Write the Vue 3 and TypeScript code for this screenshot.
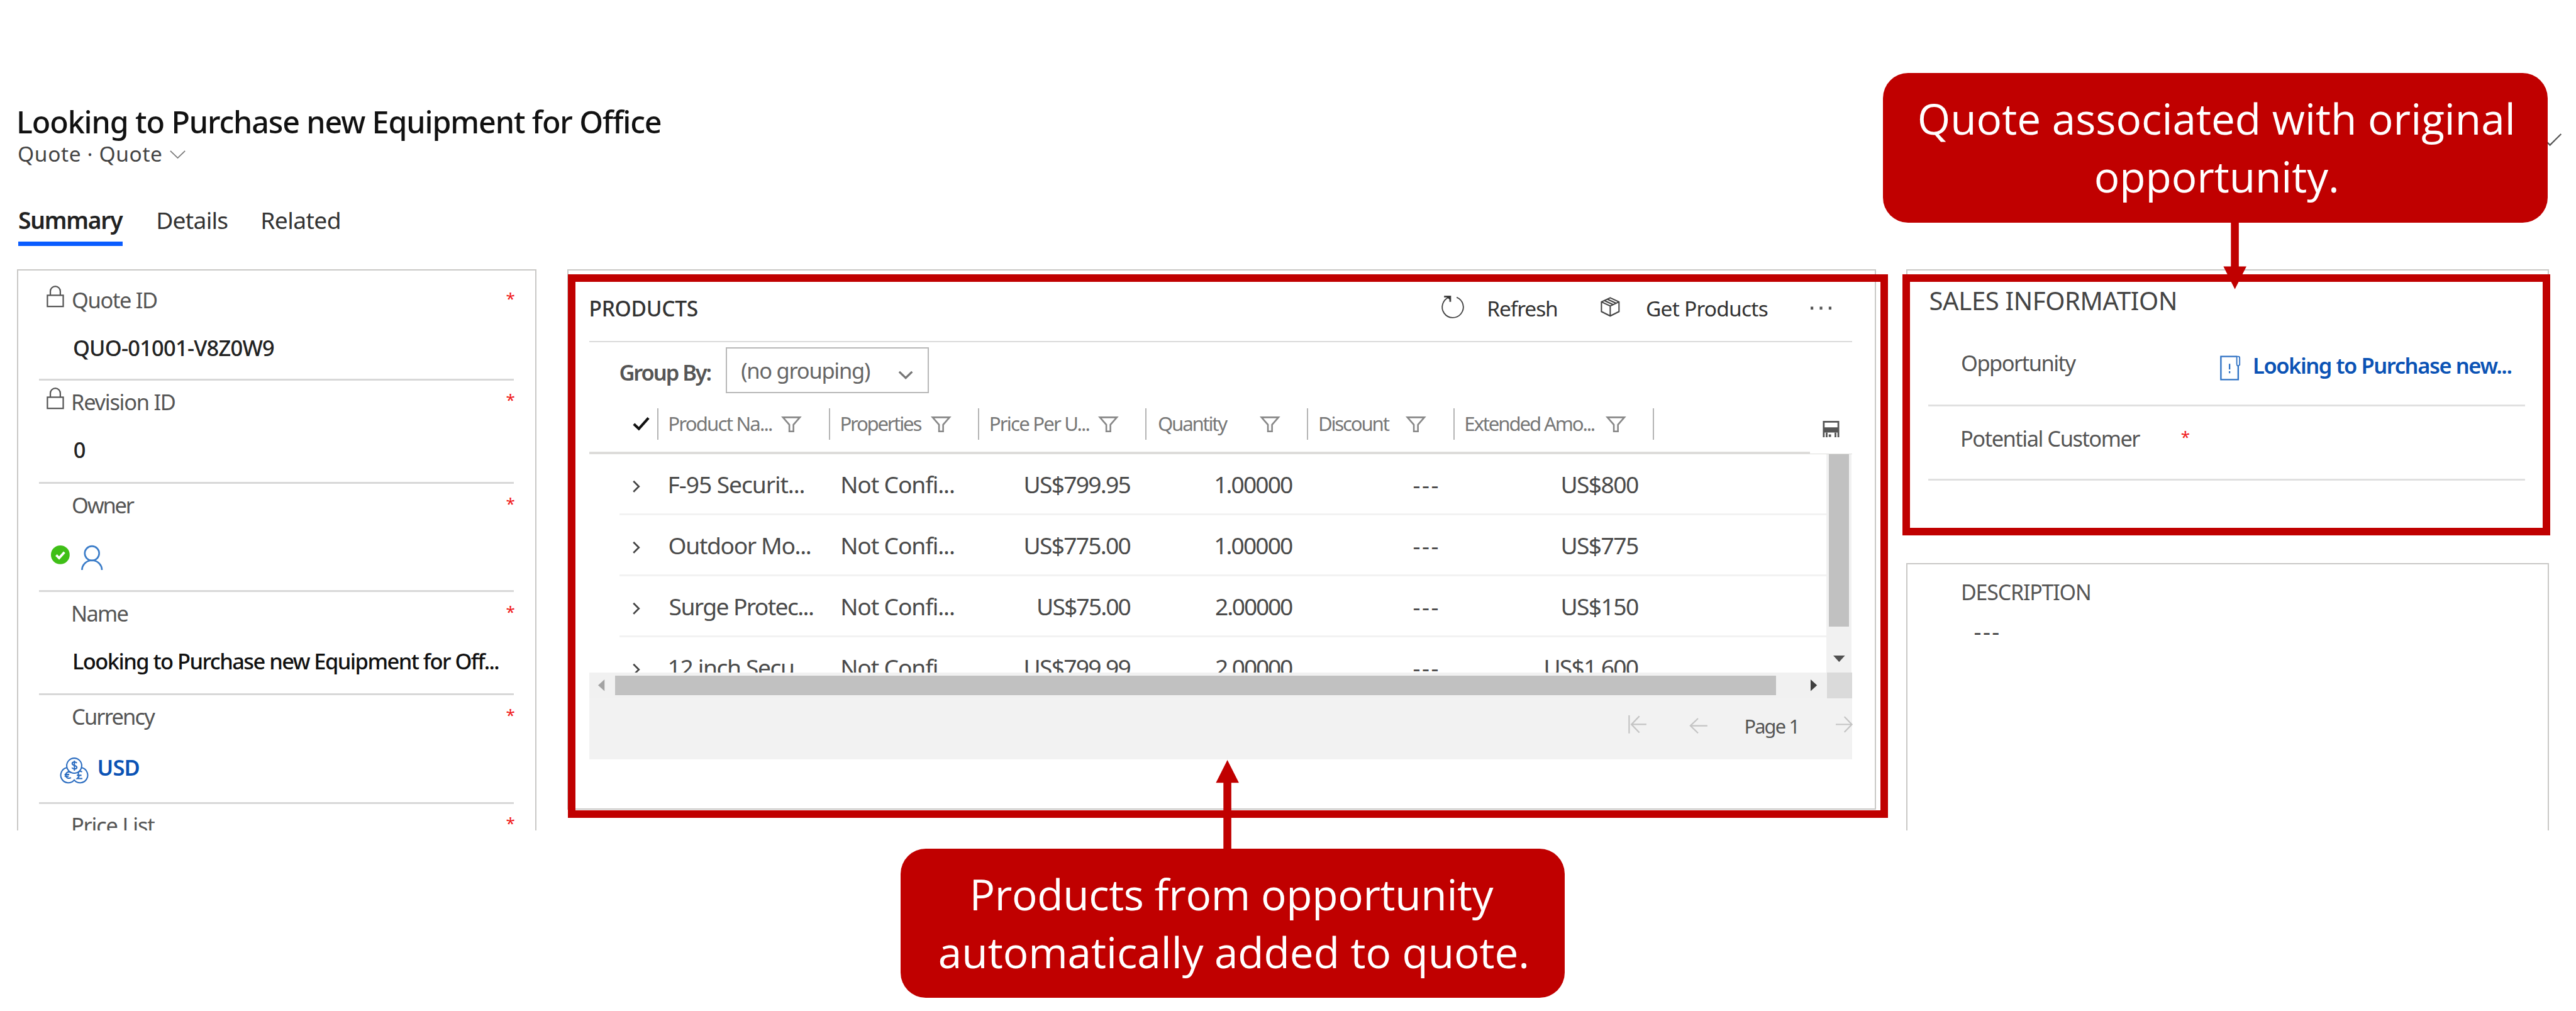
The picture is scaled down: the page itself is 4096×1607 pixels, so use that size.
<script setup lang="ts">
import type { Directive } from 'vue'

interface Field {
  label: string
  labelWidth: number
  height: number
  kind: 'text' | 'owner' | 'currency' | 'none'
  value?: string
  valueWidth?: number
  locked?: boolean
  strong?: boolean
}

interface Column {
  label: string
  width: number
}

interface Cell {
  text: string
  width: number
}

interface ProductRow {
  name: Cell
  price: Cell
  quantity: string
  extended: Cell
}

// Sets a run of text to an exact ink width, in hundredths of a rem, by
// trimming its side bearings and tracking its letters.
const vInk: Directive<HTMLElement, number> = {
  mounted(el, binding) {
    const text = (el.textContent ?? '').trim()
    const style = getComputedStyle(el)
    const unit = parseFloat(getComputedStyle(document.documentElement).fontSize) / 100
    const context = document.createElement('canvas').getContext('2d')
    if (!context || !text) return
    context.font = `${style.fontWeight} ${style.fontSize} ${style.fontFamily}`
    context.letterSpacing = '0.01px'
    const metrics = context.measureText(text)
    const ink = metrics.actualBoundingBoxLeft + metrics.actualBoundingBoxRight
    const target = binding.value * unit
    el.style.width = `${target.toFixed(2)}px`
    el.style.textIndent = `${(metrics.actualBoundingBoxLeft + 1.5 * unit).toFixed(2)}px`
    if (text.length > 1) {
      el.style.letterSpacing = `${((target - ink) / (text.length - 1)).toFixed(3)}px`
    }
  },
}

const tabs = [
  { label: 'Summary', width: 178.5, active: true },
  { label: 'Details', width: 119.5, active: false },
  { label: 'Related', width: 131.5, active: false },
]

const fields: Field[] = [
  { label: 'Quote ID', labelWidth: 144, height: 174, kind: 'text', value: 'QUO-01001-V8Z0W9', valueWidth: 342, locked: true },
  { label: 'Revision ID', labelWidth: 175, height: 177, kind: 'text', value: '0', valueWidth: 18, locked: true },
  { label: 'Owner', labelWidth: 105, height: 184, kind: 'owner' },
  { label: 'Name', labelWidth: 94, height: 177, kind: 'text', value: 'Looking to Purchase new Equipment for Off...', valueWidth: 726, strong: true },
  { label: 'Currency', labelWidth: 141, height: 185, kind: 'currency' },
  { label: 'Price List', labelWidth: 140, height: 177, kind: 'none' },
]

const columns: Column[] = [
  { label: 'Product Na...', width: 175 },
  { label: 'Properties', width: 136.5 },
  { label: 'Price Per U...', width: 168.5 },
  { label: 'Quantity', width: 118.5 },
  { label: 'Discount', width: 119 },
  { label: 'Extended Amo...', width: 220 },
]

const rows: ProductRow[] = [
  { name: { text: 'F-95 Securit...', width: 230 }, price: { text: 'US$799.95', width: 179.5 }, quantity: '1.00000', extended: { text: 'US$800', width: 129.5 } },
  { name: { text: 'Outdoor Mo...', width: 241 }, price: { text: 'US$775.00', width: 179.5 }, quantity: '1.00000', extended: { text: 'US$775', width: 129.5 } },
  { name: { text: 'Surge Protec...', width: 245.5 }, price: { text: 'US$75.00', width: 157.5 }, quantity: '2.00000', extended: { text: 'US$150', width: 129.5 } },
  { name: { text: '12 inch Secu...', width: 240 }, price: { text: 'US$799.99', width: 179.5 }, quantity: '2.00000', extended: { text: 'US$1,600', width: 158.5 } },
]
</script>

<template>
  <div class="page">
    <header class="header">
      <h1 class="title"><span v-ink="1097" class="ink">Looking to Purchase new Equipment for Office</span></h1>
      <div class="subtitle">
        <span v-ink="244" class="ink">Quote · Quote</span>
        <svg class="sub-chevron" viewBox="0 0 27 14"><path d="M1 1 13.5 13 26 1" /></svg>
      </div>
      <nav class="tabs">
        <a v-for="tab in tabs" :key="tab.label" class="tab" :class="{ active: tab.active }">
          <span v-ink="tab.width" class="ink">{{ tab.label }}</span>
        </a>
      </nav>
    </header>

    <main class="main">
      <section class="card details">
        <div v-for="field in fields" :key="field.label" class="field" :style="{ height: field.height / 100 + 'rem' }">
          <div class="label-row">
            <span class="lock-slot">
              <svg v-if="field.locked" class="lock" viewBox="0 0 30 37">
                <path d="M1.5 16.5h27v19h-27zM6.500 16V9.500a8.500 8.200 0 0 1 17 0V16" />
              </svg>
            </span>
            <span v-ink="field.labelWidth" class="ink">{{ field.label }}</span>
            <span v-ink="12" class="ink required">*</span>
          </div>
          <div v-if="field.kind === 'text'" class="value" :class="{ strong: field.strong }">
            <span v-ink="field.valueWidth ?? 0" class="ink">{{ field.value }}</span>
          </div>
          <div v-else-if="field.kind === 'owner'" class="owner">
            <svg class="status" viewBox="0 0 32 32">
              <circle cx="16" cy="16" r="16" fill="#3fbf17" />
              <path d="M9 16.500 14 21.500 23 11.500" fill="none" stroke="#fff" stroke-width="4" />
            </svg>
            <svg class="person" viewBox="0 0 37 42">
              <circle cx="18.500" cy="13.500" r="12.300" />
              <path d="M1.500 42a17 16.500 0 0 1 34 0" />
            </svg>
          </div>
          <div v-else-if="field.kind === 'currency'" class="currency">
            <svg class="coins" viewBox="0 0 43 43">
              <circle cx="21.500" cy="14" r="12.800" />
              <path d="M8.800 17.500A13 13 0 1 0 21.500 38.500 13 13 0 1 0 34.200 17.500" />
              <path d="M26 9.500c-2-2.500-8-2.500-8 1 0 4 8 2.500 8 6.500 0 3.500-6.500 3.500-8.500.5M21.800 5.500v17" />
              <path d="M16 25.500c-5-2.500-9 .5-9 4.500s4 7 9 4.500M5 29h8M5 32h7" />
              <path d="M35 24.500c-4-2-7-.5-6.500 3.500l1 5-3 3h9M26 30.500h8" />
            </svg>
            <span v-ink="69" class="ink">USD</span>
          </div>
        </div>
      </section>

      <section class="card products">
        <div class="toolbar">
          <span v-ink="181.800" class="ink products-title">PRODUCTS</span>
          <svg class="refresh" viewBox="0 0 39 38">
            <path d="M13.500 2.500A18 18 0 1 0 26 2.800" />
            <path d="M4.500 1.500h10.500v9" stroke-width="3" />
            <path d="M8 1.500h7v6z" fill="#333" stroke="none" />
          </svg>
          <span v-ink="116" class="ink">Refresh</span>
          <svg class="box" viewBox="0 0 33 34">
            <path d="M16.500 1.500 31.500 8.500V25L16.500 32.500 1.500 25V8.500zM1.500 8.500 16.500 15.500 31.500 8.500M16.500 15.500v17M6.500 6.200l15 7M11.500 3.800l15 7" />
          </svg>
          <span v-ink="206" class="ink get-products">Get Products</span>
          <svg class="dots" viewBox="0 0 36 6">
            <rect x="0" y="0.500" width="4.500" height="5" /><rect x="15.500" y="0.500" width="4.500" height="5" /><rect x="31" y="0.500" width="4.500" height="5" />
          </svg>
        </div>

        <div class="grouping">
          <span v-ink="155" class="ink group-label">Group By:</span>
          <div class="select">
            <span v-ink="219" class="ink">(no grouping)</span>
            <svg viewBox="0 0 26 15"><path d="M2 2 13 12.500 24 2" /></svg>
          </div>
        </div>

        <div class="grid-head">
          <div class="head-check">
            <svg viewBox="0 0 29 24"><path d="M2 13 10.500 21 27 2.500" /></svg>
          </div>
          <div v-for="column in columns" :key="column.label" class="head-cell">
            <span v-ink="column.width" class="ink">{{ column.label }}</span>
            <svg class="funnel" viewBox="0 0 33 27"><path d="M2 1.500h29L20 14v11.500h-7V14z" /></svg>
          </div>
          <div class="head-cell head-save">
            <svg viewBox="0 0 29 28">
              <path d="M2 28V1.500h25V28M7 20v8M22 20v8" fill="none" stroke="#555" stroke-width="3" />
              <path d="M2 11h25v9H2zM10.500 23h4v4.500h-4z" fill="#555" />
            </svg>
          </div>
        </div>
        <div class="head-line"><i class="thick"></i><i class="thin"></i></div>

        <div class="grid-body">
          <div class="rows">
            <div v-for="row in rows" :key="row.name.text" class="row">
              <span class="expand"><svg viewBox="0 0 15 22"><path d="M2.500 1.500 12 11 2.500 20.500" /></svg></span>
              <span><span v-ink="row.name.width" class="ink">{{ row.name.text }}</span></span>
              <span><span v-ink="191" class="ink">Not Confi...</span></span>
              <span class="num"><span v-ink="row.price.width" class="ink">{{ row.price.text }}</span></span>
              <span class="num"><span v-ink="131" class="ink">{{ row.quantity }}</span></span>
              <span class="num"><span v-ink="42" class="ink">---</span></span>
              <span class="num"><span v-ink="row.extended.width" class="ink">{{ row.extended.text }}</span></span>
            </div>
          </div>
          <div class="vscroll">
            <div class="vthumb"></div>
            <svg viewBox="0 0 20 11"><path d="M0 0h20L10 11z" fill="#505050" /></svg>
          </div>
        </div>
        <div class="hscroll">
          <svg class="left" viewBox="0 0 11 20"><path d="M11 0v20L0 10z" fill="#a3a3a3" /></svg>
          <div class="hthumb"></div>
          <svg class="right" viewBox="0 0 11 20"><path d="M0 0v20L11 10z" fill="#404040" /></svg>
          <div class="corner"></div>
        </div>
        <div class="pager">
          <svg class="first" viewBox="0 0 31 31"><path d="M1.500 0v31M31 15.500H6M19 1.500 5.500 15.500 19 29.500" /></svg>
          <svg class="prev" viewBox="0 0 31 27"><path d="M31 13.500H2M15 1 2 13.500 15 26" /></svg>
          <span v-ink="86" class="ink">Page 1</span>
          <svg class="next" viewBox="0 0 29 29"><path d="M0 14.500h27.500M15 1 28 14.500 15 28" /></svg>
        </div>
      </section>

      <div class="side">
        <section class="card sales">
          <h2 class="sales-title"><span v-ink="418.500" class="ink">SALES INFORMATION</span></h2>
          <div class="sales-row opportunity">
            <span v-ink="195" class="ink">Opportunity</span>
            <svg viewBox="0 0 35 43">
              <path d="M29 1.500H1.500v40h30V18" /><path d="M29 1.500h2.500q2.500 0 2.500 2.500v12q-5 4-5-2z" stroke-width="2" />
              <path d="M16.500 14v10M16.500 27v3.500" stroke-width="2.500" />
            </svg>
            <span v-ink="439" class="ink link">Looking to Purchase new...</span>
          </div>
          <div class="sales-row customer">
            <span v-ink="304.500" class="ink">Potential Customer</span>
            <span v-ink="13" class="ink required">*</span>
          </div>
        </section>
        <section class="card description">
          <div class="description-label"><span v-ink="217" class="ink">DESCRIPTION</span></div>
          <div class="description-value"><span v-ink="41.500" class="ink">---</span></div>
        </section>
      </div>
    </main>

    <svg class="corner-chevron" viewBox="0 0 40 21"><path d="M1 1 20 20 39 1" /></svg>

    <div class="frame frame-products"></div>
    <div class="frame frame-sales"></div>

    <svg class="arrow arrow-down" viewBox="0 0 40 120"><path d="M13.200 0h13.500v81h13L20 120 .4 81h12.800z" /></svg>
    <svg class="arrow arrow-up" viewBox="0 0 40 160"><path d="M13.200 160h13.500V39h13L20 0 .4 39h12.800z" /></svg>

    <div class="callout callout-quote">
      <div><span v-ink="1012.300" class="ink">Quote associated with original</span></div>
      <div><span v-ink="410.700" class="ink">opportunity.</span></div>
    </div>
    <div class="callout callout-products">
      <div><span v-ink="889" class="ink">Products from opportunity</span></div>
      <div><span v-ink="1002" class="ink">automatically added to quote.</span></div>
    </div>
  </div>
</template>

<style>
/* The design is 44rem wide; the root size makes that fill the window. */
html {
  font-size: calc(100vw / 44);
}
body {
  margin: 0;
  background: #fff;
  overflow: hidden;
}
</style>

<style scoped>
.page {
  position: relative;
  box-sizing: border-box;
  width: 44rem;
  height: 17.26rem;
  overflow: hidden;
  background: #fff;
  color: #444;
  font-family: 'Noto Sans', 'Open Sans', sans-serif;
  font-size: 0.37rem;
  line-height: 1;
}
.page *,
.page *::before {
  box-sizing: border-box;
}
svg {
  display: block;
  flex: none;
  fill: none;
  overflow: visible;
}
.ink {
  display: inline-block;
  flex: none;
  padding-top: 0.018rem;
  white-space: nowrap;
  text-align: left;
  line-height: 1;
  vertical-align: top;
}

/* header */
.header {
  padding: 1.795rem 0 0 0.308rem;
}
.title {
  margin: 0;
  height: 0.52rem;
  font-size: 0.52rem;
  font-weight: 500;
  color: #111;
}
.subtitle {
  display: flex;
  margin-top: 0.115rem;
  height: 0.36rem;
  font-size: 0.36rem;
  color: #444;
}
.sub-chevron {
  width: 0.27rem;
  height: 0.14rem;
  margin: 0.14rem 0 0 0.155rem;
  stroke: #777;
  stroke-width: 1.8;
}
.tabs {
  display: flex;
  margin-top: 0.745rem;
  gap: 0.59rem;
  font-size: 0.4rem;
  color: #333;
}
.tab {
  display: flex;
  height: 0.67rem;
}
.tab.active {
  font-weight: 600;
  color: #222;
  border-bottom: 0.08rem solid #0a5cff;
}

/* columns */
.main {
  display: flex;
  height: 9.59rem;
  margin-top: 0.388rem;
  padding-left: 0.29rem;
  overflow: hidden;
}
.card {
  flex: none;
  border: 0.03rem solid #c9c8c6;
  background: #fff;
}
.details {
  width: 8.87rem;
  height: 12rem;
  padding: 0.14rem 0.36rem 0;
}
.field {
  border-bottom: 0.035rem solid #d8d8d8;
  padding-top: 0.165rem;
}
.label-row {
  display: flex;
  height: 0.37rem;
  padding: 0 0.02rem 0 0.12rem;
  color: #555;
}
.lock-slot {
  width: 0.3rem;
  margin-right: 0.14rem;
}
.lock {
  width: 0.3rem;
  height: 0.37rem;
  margin-top: -0.04rem;
  stroke: #555;
  stroke-width: 2.4;
}
.required {
  font-size: 0.28rem;
  color: #f01818;
  margin-top: 0.01rem;
}
.label-row .required {
  margin-left: auto;
}
.value {
  margin-top: 0.455rem;
  padding-left: 0.58rem;
  color: #222;
  font-weight: 500;
}
.value.strong {
  color: #111;
}
.owner {
  display: flex;
  gap: 0.2rem;
  margin-top: 0.515rem;
  padding-left: 0.2rem;
}
.status {
  width: 0.32rem;
  height: 0.32rem;
}
.person {
  width: 0.37rem;
  height: 0.42rem;
  stroke: #3a7cc8;
  stroke-width: 2.8;
}
.currency {
  display: flex;
  gap: 0.195rem;
  margin-top: 0.495rem;
  padding-left: 0.38rem;
  font-weight: 600;
  color: #0b53b5;
}
.coins {
  width: 0.43rem;
  height: 0.43rem;
  margin-top: 0.03rem;
  stroke: #2a6cc0;
  stroke-width: 2.2;
}

/* products */
.products {
  width: 22.35rem;
  height: 9.23rem;
  margin-left: 0.53rem;
  padding: 0 0.38rem 0 0.355rem;
}
.toolbar {
  display: flex;
  height: 1.225rem;
  padding: 0.457rem 0.35rem 0 0.012rem;
  border-bottom: 0.03rem solid #dadada;
  font-size: 0.36rem;
  color: #333;
}
.products-title {
  font-weight: 500;
}
.refresh {
  width: 0.39rem;
  height: 0.38rem;
  margin: -0.02rem 0.405rem 0 auto;
  stroke: #444;
  stroke-width: 2;
}
.box {
  width: 0.33rem;
  height: 0.34rem;
  margin: 0 0.45rem 0 0.765rem;
  stroke: #444;
  stroke-width: 2.2;
}
.dots {
  width: 0.36rem;
  height: 0.06rem;
  margin: 0.165rem 0 0 0.75rem;
  fill: #555;
}
.grouping {
  display: flex;
  height: 0.875rem;
  padding: 0.095rem 0 0 0.515rem;
}
.group-label {
  margin-top: 0.228rem;
  font-weight: 600;
  color: #555;
}
.select {
  display: flex;
  width: 3.46rem;
  height: 0.78rem;
  margin-left: 0.27rem;
  padding: 0.17rem 0.24rem 0 0.23rem;
  border: 0.03rem solid #b8b8b8;
  color: #666;
}
.select svg {
  width: 0.26rem;
  height: 0.15rem;
  margin: 0.2rem 0 0 auto;
  stroke: #777;
  stroke-width: 3.5;
}
.grid-head {
  display: grid;
  grid-template-columns: 1.155rem 2.935rem 2.55rem 2.86rem 2.76rem 2.495rem 3.415rem 3.39rem;
  height: 1rem;
  padding-top: 0.26rem;
  font-size: 0.335rem;
  color: #777;
}
.head-check {
  padding: 0.14rem 0 0 0.745rem;
}
.head-check svg {
  width: 0.29rem;
  height: 0.24rem;
  stroke: #111;
  stroke-width: 4.5;
}
.head-cell {
  display: flex;
  justify-content: space-between;
  height: 0.53rem;
  padding: 0.08rem 0.47rem 0 0.185rem;
  border-left: 0.022rem solid #b4b4b4;
}
.funnel {
  width: 0.33rem;
  height: 0.27rem;
  margin-top: 0.055rem;
  stroke: #888;
  stroke-width: 2.8;
}
.head-save {
  justify-content: flex-end;
  padding-right: 0.2rem;
}
.head-save svg {
  width: 0.29rem;
  height: 0.28rem;
  margin-top: 0.13rem;
}
.head-line {
  display: flex;
  height: 0.047rem;
  align-items: flex-end;
}
.thick {
  width: 20.855rem;
  height: 0.047rem;
  background: #dddcda;
}
.thin {
  flex: 1;
  height: 0.02rem;
  background: #dddcda;
}
.grid-body {
  display: flex;
  height: 3.723rem;
  overflow: hidden;
}
.rows {
  width: 21.13rem;
}
.row {
  display: grid;
  grid-template-columns: 0.84rem 2.95rem 1.92rem 3.005rem 2.765rem 2.486rem 3.421rem;
  height: 1.04rem;
  margin-left: 0.515rem;
  padding-top: 0.294rem;
  border-bottom: 0.04rem solid #f2f2f2;
  font-size: 0.4rem;
  color: #4a4a4a;
}
.num {
  text-align: right;
}
.expand {
  padding: 0.143rem 0 0 0.215rem;
}
.expand svg {
  width: 0.145rem;
  height: 0.22rem;
  stroke: #444;
  stroke-width: 3;
}
.vscroll {
  display: flex;
  flex-direction: column;
  align-items: center;
  width: 0.43rem;
  background: #f1f1f1;
}
.vthumb {
  width: 0.34rem;
  height: 2.938rem;
  background: #c1c1c1;
}
.vscroll svg {
  width: 0.2rem;
  height: 0.11rem;
  margin-top: 0.49rem;
}
.hscroll {
  display: flex;
  align-items: center;
  height: 0.44rem;
  background: #f1f1f1;
}
.left {
  width: 0.11rem;
  height: 0.2rem;
  margin-left: 0.15rem;
}
.hthumb {
  width: 19.83rem;
  height: 0.33rem;
  margin-left: 0.175rem;
  background: #c1c1c1;
}
.right {
  width: 0.11rem;
  height: 0.2rem;
  margin-left: 0.6rem;
}
.corner {
  align-self: stretch;
  width: 0.43rem;
  margin-left: auto;
  background: #dadada;
}
.pager {
  display: flex;
  justify-content: flex-end;
  height: 1.037rem;
  padding-top: 0.288rem;
  background: #f2f2f2;
  font-size: 0.33rem;
  color: #555;
}
.pager svg {
  stroke: #c4c4c4;
  stroke-width: 2.4;
}
.pager .ink {
  margin: 0.01rem 0.695rem 0 0.64rem;
}
.first {
  width: 0.31rem;
  height: 0.31rem;
}
.prev {
  width: 0.31rem;
  height: 0.27rem;
  margin: 0.045rem 0 0 0.73rem;
}
.next {
  width: 0.285rem;
  height: 0.29rem;
  margin-top: 0.015rem;
}

/* right column */
.side {
  display: flex;
  flex: none;
  flex-direction: column;
  gap: 0.52rem;
  width: 10.98rem;
  margin-left: 0.52rem;
}
.sales {
  height: 4.5rem;
}
.sales-title {
  margin: 0;
  height: 0.72rem;
  padding: 0.29rem 0 0 0.377rem;
  font-size: 0.43rem;
  font-weight: 400;
  color: #444;
}
.sales-row {
  display: flex;
  width: 10.2rem;
  margin-left: 0.35rem;
  padding-left: 0.57rem;
  border-bottom: 0.035rem solid #e0e0e0;
  color: #555;
}
.opportunity {
  height: 1.605rem;
  padding-top: 0.668rem;
}
.opportunity svg {
  width: 0.345rem;
  height: 0.43rem;
  margin: 0.065rem 0.23rem 0 2.47rem;
  stroke: #2f72c4;
  stroke-width: 2.6;
}
.link {
  margin-top: 0.04rem;
  font-weight: 600;
  color: #0b53b5;
}
.customer {
  height: 1.272rem;
  padding-top: 0.345rem;
}
.customer .required {
  margin-left: 0.7rem;
}
.description {
  height: 8rem;
}
.description-label {
  padding: 0.276rem 0 0 0.93rem;
  font-size: 0.365rem;
  color: #555;
}
.description-value {
  margin-top: 0.255rem;
  padding-left: 1.13rem;
  font-size: 0.4rem;
  color: #444;
}

/* annotations over the form */
.corner-chevron {
  position: absolute;
  left: 43.36rem;
  top: 2.28rem;
  width: 0.4rem;
  height: 0.21rem;
  stroke: #555;
  stroke-width: 2.4;
}
.frame {
  position: absolute;
  border: 0.13rem solid #c00000;
}
.frame-products {
  left: 9.7rem;
  top: 4.68rem;
  width: 22.55rem;
  height: 9.28rem;
}
.frame-sales {
  left: 32.5rem;
  top: 4.68rem;
  width: 11.06rem;
  height: 4.465rem;
}
.arrow {
  position: absolute;
  width: 0.4rem;
  fill: #c00000;
}
.arrow-down {
  left: 37.97rem;
  top: 3.737rem;
  height: 1.2rem;
}
.arrow-up {
  left: 20.768rem;
  top: 12.977rem;
  height: 1.6rem;
}
.callout {
  position: absolute;
  padding-top: 0.27rem;
  border-radius: 0.43rem;
  background: #c00000;
  color: #fff;
  font-family: 'Open Sans', 'Noto Sans', sans-serif;
  font-size: 0.725rem;
  text-align: center;
}
.callout div {
  height: 0.99rem;
  padding-top: 0.13rem;
}
.callout-quote {
  left: 32.166rem;
  top: 1.25rem;
  width: 11.346rem;
  height: 2.55rem;
}
.callout-products {
  left: 15.38rem;
  top: 14.49rem;
  width: 11.346rem;
  height: 2.55rem;
}
</style>
